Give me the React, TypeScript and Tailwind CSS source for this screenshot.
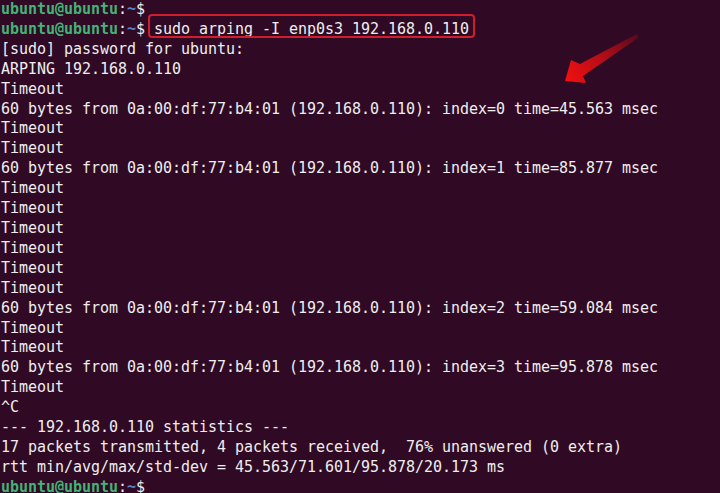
import React from "react";

const G = ({ children }: { children: React.ReactNode }) => (
  <span className="font-bold text-[#44b377]">{children}</span>
);

const Prompt = () => (
  <>
    <G>ubuntu@ubuntu</G>
    <span className="text-[#eeeeee]">:</span>
    <span className="font-bold text-[#5a83c4]">~</span>
    <span>$ </span>
  </>
);

const lines: string[] = [
  "[sudo] password for ubuntu:",
  "ARPING 192.168.0.110",
  "Timeout",
  "60 bytes from 0a:00:df:77:b4:01 (192.168.0.110): index=0 time=45.563 msec",
  "Timeout",
  "Timeout",
  "60 bytes from 0a:00:df:77:b4:01 (192.168.0.110): index=1 time=85.877 msec",
  "Timeout",
  "Timeout",
  "Timeout",
  "Timeout",
  "Timeout",
  "Timeout",
  "60 bytes from 0a:00:df:77:b4:01 (192.168.0.110): index=2 time=59.084 msec",
  "Timeout",
  "Timeout",
  "60 bytes from 0a:00:df:77:b4:01 (192.168.0.110): index=3 time=95.878 msec",
  "Timeout",
  "^C",
  "--- 192.168.0.110 statistics ---",
  "17 packets transmitted, 4 packets received,  76% unanswered (0 extra)",
  "rtt min/avg/max/std-dev = 45.563/71.601/95.878/20.173 ms",
];

export default function App() {
  return (
    <div
      className="relative w-[720px] h-[493px] overflow-hidden bg-[#300a24] text-[#eeeeee] text-[15px] tracking-[-0.03px] leading-[19.9px] whitespace-pre pl-[1px]"
      style={{ fontFamily: '"DejaVu Sans Mono", "Liberation Mono", monospace' }}
    >
      <div>
        <Prompt />
      </div>
      <div>
        <Prompt />
        <span className="relative">
          sudo arping -I enp0s3 192.168.0.110
          <span className="absolute -left-[6px] -right-[6px] -top-[6px] bottom-0 border-2 border-[#cf1f2c] rounded-[4px]" />
        </span>
      </div>
      {lines.map((l, i) => (
        <div key={i}>{l}</div>
      ))}
      <div>
        <Prompt />
      </div>
      <svg
        className="absolute left-0 top-0"
        width="720"
        height="493"
        viewBox="0 0 720 493"
      >
        <defs>
          <linearGradient id="ag" x1="636" y1="36" x2="566" y2="80" gradientUnits="userSpaceOnUse">
            <stop offset="0" stopColor="#5a0a1c" />
            <stop offset="0.45" stopColor="#b00d18" />
            <stop offset="1" stopColor="#f01010" />
          </linearGradient>
        </defs>
        <polygon
          points="637,34 580,64 571,60 565,81 586,83 583,76 638,38"
          fill="url(#ag)"
        />
      </svg>
    </div>
  );
}
